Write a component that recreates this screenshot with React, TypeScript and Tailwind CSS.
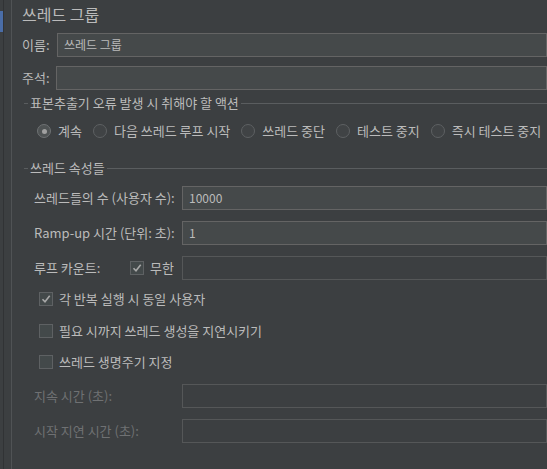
import type { ReactNode } from "react";

const font = { fontFamily: '"Noto Sans CJK KR", "Noto Sans", sans-serif' };

function Input({ value, disabled }: { value?: string; disabled?: boolean }) {
  return (
    <div
      className={`flex-1 h-[24px] border flex items-center pl-[6px] text-[12px] text-[#bbbbbb] ${
        disabled ? "border-[#555758] bg-[#3c3f41]" : "border-[#646464] bg-[#45494a]"
      }`}
    >
      {value}
    </div>
  );
}

function Radio({ label, checked }: { label: string; checked?: boolean }) {
  return (
    <div className="flex items-center gap-[7px]">
      <div
        className={`w-[14px] h-[14px] rounded-full border flex items-center justify-center ${
          checked ? "border-[#6e7173] bg-[#4f5354]" : "border-[#5e6163] bg-[#404345]"
        }`}
      >
        {checked && <div className="w-[5px] h-[5px] rounded-full bg-[#a0a0a0]" />}
      </div>
      <span>{label}</span>
    </div>
  );
}

function Check({ checked }: { checked?: boolean }) {
  return (
    <div className="w-[14px] h-[14px] shrink-0 border border-[#5e6163] bg-[#43494a] flex items-center justify-center">
      {checked && (
        <svg width="10" height="10" viewBox="0 0 10 10">
          <path d="M1.5 5.2 L4 7.8 L8.7 1.8" fill="none" stroke="#a8a8a8" strokeWidth="1.6" />
        </svg>
      )}
    </div>
  );
}

function GroupTitle({ children }: { children: ReactNode }) {
  return (
    <div className="flex items-center h-[12px]">
      <div className="w-[4px] h-px bg-[#5a5d5f]" />
      <span className="px-[2px] leading-[12px]">{children}</span>
      <div className="flex-1 h-px bg-[#5a5d5f]" />
    </div>
  );
}

function FieldRow({ label, value, disabled }: { label: string; value?: string; disabled?: boolean }) {
  return (
    <div className="flex items-center h-[24px]">
      <span className={`w-[158px] shrink-0 pl-[10px] whitespace-nowrap ${disabled ? "text-[#6f7173]" : ""}`}>
        {label}
      </span>
      <Input value={value} disabled={disabled} />
    </div>
  );
}

function CheckRow({ label, checked }: { label: string; checked?: boolean }) {
  return (
    <div className="flex items-center h-[20px] gap-[6px] pl-[15px]">
      <Check checked={checked} />
      <span>{label}</span>
    </div>
  );
}

export default function App() {
  return (
    <div
      className="w-[547px] h-[469px] bg-[#3c3f41] text-[#bbbbbb] text-[13px] flex overflow-hidden"
      style={font}
    >
      <div className="w-[3px] flex flex-col">
        <div className="h-[11px]" />
        <div className="h-[21px] bg-[#4a6da7]" />
      </div>
      <div className="w-px bg-[#313335]" />
      <div className="w-[7px]" />
      <div className="w-px bg-[#505355]" />
      <div className="flex-1 flex flex-col pl-[10px] min-w-0">
        <div className="h-[33px] flex items-start pt-[3px]">
          <span className="text-[16px] leading-[22px]">쓰레드 그룹</span>
        </div>
        <div className="flex items-center h-[24px]">
          <span className="w-[35px] shrink-0">이름:</span>
          <Input value="쓰레드 그룹" />
        </div>
        <div className="flex items-center h-[24px] mt-[9px]">
          <span className="w-[34px] shrink-0">주석:</span>
          <Input />
        </div>

        <div className="mt-[7px] pl-[2px]">
          <GroupTitle>표본추출기 오류 발생 시 취해야 할 액션</GroupTitle>
          <div className="flex items-center h-[20px] mt-[12px] pl-[13px] gap-[11px] whitespace-nowrap">
            <Radio label="계속" checked />
            <Radio label="다음 쓰레드 루프 시작" />
            <Radio label="쓰레드 중단" />
            <Radio label="테스트 중지" />
            <Radio label="즉시 테스트 중지" />
          </div>
        </div>

        <div className="mt-[21px] pl-[2px]">
          <GroupTitle>쓰레드 속성들</GroupTitle>
          <div className="flex flex-col mt-[12px]">
            <FieldRow label="쓰레드들의 수 (사용자 수):" value="10000" />
            <div className="h-[11px]" />
            <FieldRow label="Ramp-up 시간 (단위: 초):" value="1" />
            <div className="h-[11px]" />
            <div className="flex items-center h-[24px] whitespace-nowrap">
              <span className="w-[106px] shrink-0 pl-[10px]">루프 카운트:</span>
              <div className="w-[52px] shrink-0 flex items-center gap-[6px]">
                <Check checked />
                <span>무한</span>
              </div>
              <Input disabled />
            </div>
            <div className="h-[9px]" />
            <CheckRow label="각 반복 실행 시 동일 사용자" checked />
            <div className="h-[12px]" />
            <CheckRow label="필요 시까지 쓰레드 생성을 지연시키기" />
            <div className="h-[11px]" />
            <CheckRow label="쓰레드 생명주기 지정" />
            <div className="h-[12px]" />
            <FieldRow label="지속 시간 (초):" disabled />
            <div className="h-[11px]" />
            <FieldRow label="시작 지연 시간 (초):" disabled />
          </div>
        </div>
      </div>
    </div>
  );
}
